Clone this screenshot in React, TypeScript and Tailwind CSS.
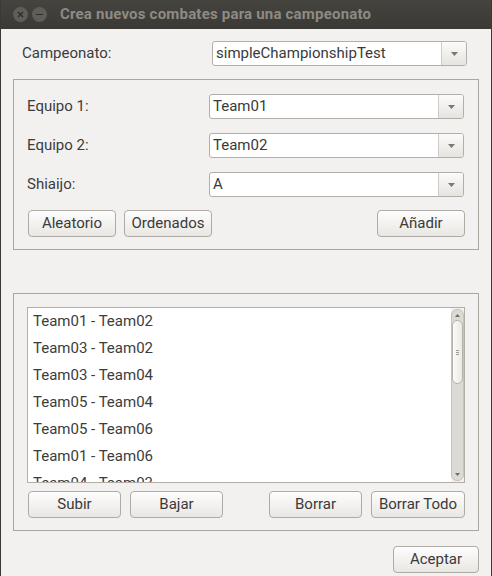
import React from "react";

const matches = [
  "Team01 - Team02",
  "Team03 - Team02",
  "Team03 - Team04",
  "Team05 - Team04",
  "Team05 - Team06",
  "Team01 - Team06",
  "Team04 - Team03",
];

const font = { fontFamily: "Roboto, 'Noto Sans', sans-serif" };

function Combo({ value, width }: { value: string; width: string }) {
  return (
    <div
      className={`flex h-[25px] ${width} rounded-[3px] border border-[#b3afa8] bg-white overflow-hidden`}
    >
      <div className="flex-1 flex items-center pl-[3px] text-[15px] text-[#3a3a3a]">{value}</div>
      <div className="w-[25px] h-full border-l border-[#cfccc6] bg-gradient-to-b from-[#fbfbfa] to-[#e6e4e0] flex items-center justify-center">
        <svg width="9" height="6" viewBox="0 0 9 6">
          <path d="M1 1 L8 1 L4.5 5 Z" fill="#7a7873" />
        </svg>
      </div>
    </div>
  );
}

function Btn({ label, width }: { label: string; width: string }) {
  return (
    <button
      className={`h-[27px] ${width} rounded-[4px] border border-[#aeaba5] bg-gradient-to-b from-[#fdfdfd] to-[#e9e7e3] text-[15px] text-[#3a3a3a] shadow-[inset_0_1px_0_#ffffff] flex items-center justify-center`}
    >
      {label}
    </button>
  );
}

function Row({ label, value }: { label: string; value: string }) {
  return (
    <div className="flex items-center h-[25px]">
      <span className="w-[195px] pl-[13px] text-[15px] text-[#3c3c3c]">{label}</span>
      <Combo value={value} width="w-[255px]" />
    </div>
  );
}

export default function App() {
  return (
    <div
      className="w-[492px] h-[576px] bg-[#f2f1f0] flex flex-col border-x border-[#3a3935] overflow-hidden"
      style={font}
    >
      {/* title bar */}
      <div className="h-[29px] bg-gradient-to-b from-[#45443f] to-[#3a3935] flex items-center pl-[12px] gap-[4px] shrink-0">
        <div className="w-[15px] h-[15px] rounded-full bg-[#5f5e59] flex items-center justify-center">
          <svg width="7" height="7" viewBox="0 0 7 7">
            <path d="M1 1 L6 6 M6 1 L1 6" stroke="#2f2e2b" strokeWidth="1.4" />
          </svg>
        </div>
        <div className="w-[15px] h-[15px] rounded-full bg-[#5f5e59] flex items-center justify-center">
          <div className="w-[7px] h-[1.5px] bg-[#2f2e2b]" />
        </div>
        <span className="ml-[9px] text-[15px] font-bold text-[#8e8b84] tracking-[0.2px]">
          Crea nuevos combates para una campeonato
        </span>
      </div>

      {/* campeonato */}
      <div className="flex items-center h-[25px] mt-[12px] pl-[21px]">
        <span className="w-[190px] text-[15px] text-[#3c3c3c]">Campeonato:</span>
        <Combo value="simpleChampionshipTest" width="w-[255px]" />
      </div>

      {/* panel 1 */}
      <div className="mx-[12px] mt-[13px] border border-[#aaa7a1] flex flex-col pt-[14px] pb-[12px] gap-[14px]">
        <Row label="Equipo 1:" value="Team01" />
        <Row label="Equipo 2:" value="Team02" />
        <Row label="Shiaijo:" value="A" />
        <div className="flex pl-[14px] pr-[13px] mt-[-1px]">
          <div className="flex gap-[8px]">
            <Btn label="Aleatorio" width="w-[88px]" />
            <Btn label="Ordenados" width="w-[88px]" />
          </div>
          <div className="ml-auto">
            <Btn label="Añadir" width="w-[88px]" />
          </div>
        </div>
      </div>

      {/* panel 2 */}
      <div className="mx-[12px] mt-[43px] border border-[#aaa7a1] flex flex-col pt-[13px] pb-[12px] px-[13px] gap-[8px]">
        <div className="flex h-[176px] border border-[#b3afa8] bg-white">
          <div className="flex-1 overflow-hidden pl-[5px]">
            {matches.map((m) => (
              <div key={m} className="h-[27px] shrink-0 flex items-center text-[15px] text-[#3c3c3c]">
                {m}
              </div>
            ))}
          </div>
          <div className="w-[13px] bg-[#f2f1f0] py-[1px]">
            <div className="h-full rounded-[6px] border border-[#c6c3bd] bg-[#dcdad5] flex flex-col items-center">
              <svg width="7" height="10" viewBox="0 0 7 10" className="shrink-0">
                <path d="M1 7 L6 7 L3.5 4 Z" fill="#6e6c67" />
              </svg>
              <div className="w-[11px] h-[64px] rounded-[6px] border border-[#b5b2ac] bg-gradient-to-r from-[#fbfbfa] to-[#ebe9e6] flex flex-col items-center justify-center gap-[1px]">
                <div className="w-[3px] h-[1px] bg-[#9e9b95]" />
                <div className="w-[3px] h-[1px] bg-[#9e9b95]" />
                <div className="w-[3px] h-[1px] bg-[#9e9b95]" />
              </div>
              <div className="flex-1" />
              <svg width="7" height="10" viewBox="0 0 7 10" className="shrink-0">
                <path d="M1 3 L6 3 L3.5 6 Z" fill="#6e6c67" />
              </svg>
            </div>
          </div>
        </div>
        <div className="flex">
          <div className="flex gap-[9px] pl-[1px]">
            <Btn label="Subir" width="w-[93px]" />
            <Btn label="Bajar" width="w-[93px]" />
          </div>
          <div className="ml-auto flex gap-[9px]">
            <Btn label="Borrar" width="w-[93px]" />
            <Btn label="Borrar Todo" width="w-[94px]" />
          </div>
        </div>
      </div>

      {/* footer */}
      <div className="flex justify-end pr-[12px] mt-[15px]">
        <Btn label="Aceptar" width="w-[86px]" />
      </div>
    </div>
  );
}
